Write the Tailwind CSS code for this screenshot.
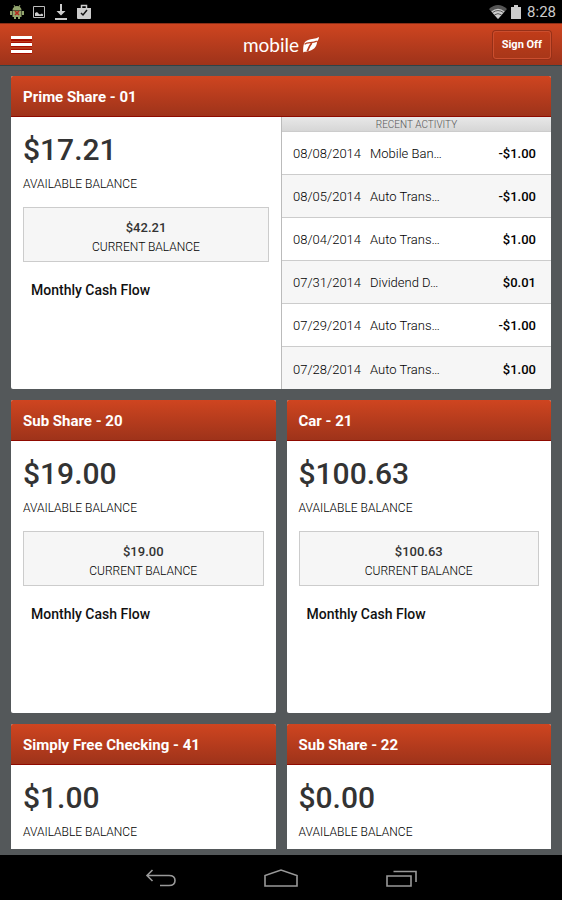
<!DOCTYPE html>
<html lang="en">
<head>
<meta charset="utf-8">
<meta name="viewport" content="width=device-width, initial-scale=1">
<title>Mobile Banking - Accounts</title>
<script src="https://cdn.jsdelivr.net/npm/@tailwindcss/browser@4"></script>
</head>
<body class="flex h-screen flex-col overflow-hidden bg-black font-[Roboto,sans-serif] text-[#333]">

<!-- Device status bar -->
<div class="flex h-[23px] shrink-0 items-center justify-between bg-black pr-1.5 pl-2.5">
  <div class="flex items-center gap-2">
    <svg class="h-4 w-[14px]" viewBox="0 0 14 16" fill="none"><path d="M4 1l1 2M10 1L9 3" stroke="#8fa06c"/><path d="M2.500 6a4.500 4 0 0 1 9 0zM2.500 6.500h9V13h-9z" fill="#93a56e"/><path d="M1 7v4M13 7v4M5 13v2M9 13v2" stroke="#93a56e" stroke-width="2"/><path d="M5 7l4 4M9 7l-4 4" stroke="#b3291f" stroke-width="1.600"/></svg>
    <svg class="h-4 w-[14px]" viewBox="0 0 14 16" fill="none"><path d="M1.500 2.500h11v11h-11z" stroke="#bbb"/><path d="M3 12V9l2-1 2 2 1 .5 2-1 1 1V12z" fill="#ccc"/></svg>
    <svg class="h-4 w-[14px]" viewBox="0 0 14 16"><path d="M6 0h2v7h3.500L7 11.500 2.500 7H6zM1 14h12v2H1z" fill="#ccc"/></svg>
    <svg class="h-4 w-4" viewBox="0 0 16 16" fill="none"><path d="M1 4h14v10q0 1-1 1H2q-1 0-1-1z" fill="#ccc"/><path d="M5.500 4V1.500h5V4" stroke="#ccc" stroke-width="1.500"/><path d="M5 9l2 2 4-5" stroke="#111" stroke-width="1.500"/></svg>
  </div>
  <div class="flex items-center gap-1">
    <svg class="h-[14px] w-[18px]" viewBox="0 0 18 14"><path d="M0 4Q9-4 18 4L9 14z" fill="#555"/><path d="M2.300 6.500Q9 1 15.700 6.500L9 14z" fill="#ccc"/><path d="M3.500 7.600Q9 3.500 14.500 7.600M5.500 9.800Q9 7.500 12.500 9.800" fill="none" stroke="#333" stroke-width=".8"/></svg>
    <svg class="h-[14px] w-[10px]" viewBox="0 0 10 14"><path d="M0 2h3V0h4v2h3v12H0z" fill="#ccc"/></svg>
    <span class="pl-0.5 text-[15px] leading-4 text-[#ccc]">8:28</span>
  </div>
</div>

<!-- App header -->
<header class="grid h-[43px] shrink-0 grid-cols-[1fr_auto_1fr] items-center border-t border-b border-t-[#8b2f18] border-b-[#2f4347] bg-linear-to-b from-[#cf4520] to-[#9e331a] px-[11px]">
  <button type="button" aria-label="Menu" class="h-[18px] w-[21px]">
    <svg class="h-[18px] w-[21px]" viewBox="0 0 21 18"><path d="M0 0h21v5H0zM0 6h21v5H0zM0 13h21v5H0z" fill="#a80f00"/><path d="M0 0h21v3H0zM0 7h21v3H0zM0 14h21v3H0z" fill="#fff"/></svg>
  </button>
  <div class="flex items-center gap-1 text-white">
    <span class="font-[Lato,sans-serif] text-[19px] leading-5">mobile</span>
    <svg class="h-4 w-4" viewBox="0 0 16 16" fill="none"><path d="M16 0C12.500 2 8.500 1.700 5 3 1 4.500 0 7.500.2 15.500 1.200 14.600 2.500 14.800 4 14.500 10.500 13.500 14 10 14 4.500 15.200 3.300 15.800 2 16 0z" fill="#fff"/><path d="M1.500 7.300C4.500 4.700 9 6.600 13.800 4.200" stroke="#b73d1d" stroke-width="1.300"/><path d="M8.700 6C7 8.200 5.500 11 4.300 14.200" stroke="#b73d1d" stroke-width="1.800"/></svg>
  </div>
  <button type="button" class="h-7 justify-self-end rounded-[3px] border border-[#cb4e2e] bg-linear-to-b from-[#c03c19] to-[#a83719] px-2 pt-0.5 text-[11px] font-bold text-white shadow-[0_0_0_1px_#963018]">Sign Off</button>
</header>

<!-- Accounts -->
<main class="flex min-h-0 flex-1 flex-col bg-[#54585a] px-[11px] pt-2.5 pb-1.5">
  <div class="grid min-h-0 flex-1 auto-rows-[313px] grid-cols-2 gap-[11px] overflow-hidden">

    <section class="col-span-2 flex flex-col overflow-hidden rounded-[2px] bg-white">
      <h2 class="h-[41px] shrink-0 border-b border-[#8f0a00] bg-linear-to-b from-[#cf4520] to-[#9e331a] px-3 text-[15px] leading-[43px] font-bold text-white">Prime Share - 01</h2>
      <div class="grid min-h-0 flex-1 grid-cols-2">
        <div class="px-3 pt-[15px]">
          <p class="text-[30px] leading-9 font-medium">$17.21</p>
          <p class="mt-2 text-xs leading-4 font-light text-black">AVAILABLE BALANCE</p>
          <div class="mt-[15px] h-[55px] border border-[#ccc] bg-[#f6f6f6] pt-2.5 text-center">
            <p class="text-[13px] leading-5 font-medium">$42.21</p>
            <p class="text-xs leading-[18px] font-light text-black">CURRENT BALANCE</p>
          </div>
          <h3 class="mt-[18px] px-2 text-sm leading-5 font-medium text-[#111]">Monthly Cash Flow</h3>
        </div>
        <div class="overflow-hidden border-l border-[#bbb]">
          <h3 class="h-[14px] bg-linear-to-b from-[#e8e8e8] to-[#d6d6d6] text-center text-[10px] leading-4 font-light text-[#555]">RECENT ACTIVITY</h3>
          <table class="w-full table-fixed border-collapse text-[13px]">
            <colgroup><col class="w-[88px]"><col><col class="w-[70px]"></colgroup>
            <tbody>
              <tr class="h-[43px] border-t border-[#ccc]"><td class="pt-0.5 pl-[11px] font-light text-black">08/08/2014</td><td class="pt-0.5 font-light text-black">Mobile Ban…</td><td class="pt-0.5 pr-[15px] text-right font-medium text-black">-$1.00</td></tr>
              <tr class="h-[43px] border-t border-[#ccc] bg-[#f6f6f6]"><td class="pt-0.5 pl-[11px] font-light text-black">08/05/2014</td><td class="pt-0.5 font-light text-black">Auto Trans…</td><td class="pt-0.5 pr-[15px] text-right font-medium text-black">-$1.00</td></tr>
              <tr class="h-[43px] border-t border-[#ccc]"><td class="pt-0.5 pl-[11px] font-light text-black">08/04/2014</td><td class="pt-0.5 font-light text-black">Auto Trans…</td><td class="pt-0.5 pr-[15px] text-right font-medium text-black">$1.00</td></tr>
              <tr class="h-[43px] border-t border-[#ccc] bg-[#f6f6f6]"><td class="pt-0.5 pl-[11px] font-light text-black">07/31/2014</td><td class="pt-0.5 font-light text-black">Dividend D…</td><td class="pt-0.5 pr-[15px] text-right font-medium text-black">$0.01</td></tr>
              <tr class="h-[43px] border-t border-[#ccc]"><td class="pt-0.5 pl-[11px] font-light text-black">07/29/2014</td><td class="pt-0.5 font-light text-black">Auto Trans…</td><td class="pt-0.5 pr-[15px] text-right font-medium text-black">-$1.00</td></tr>
              <tr class="h-[43px] border-t border-[#ccc] bg-[#f6f6f6]"><td class="pt-0.5 pl-[11px] font-light text-black">07/28/2014</td><td class="pt-0.5 font-light text-black">Auto Trans…</td><td class="pt-0.5 pr-[15px] text-right font-medium text-black">$1.00</td></tr>
            </tbody>
          </table>
        </div>
      </div>
    </section>

    <section class="overflow-hidden rounded-[2px] bg-white">
      <h2 class="h-[41px] border-b border-[#8f0a00] bg-linear-to-b from-[#cf4520] to-[#9e331a] px-3 text-[15px] leading-[43px] font-bold text-white">Sub Share - 20</h2>
      <div class="px-3 pt-[15px]">
        <p class="text-[30px] leading-9 font-medium">$19.00</p>
        <p class="mt-2 text-xs leading-4 font-light text-black">AVAILABLE BALANCE</p>
        <div class="mt-[15px] h-[55px] border border-[#ccc] bg-[#f6f6f6] pt-2.5 text-center">
          <p class="text-[13px] leading-5 font-medium">$19.00</p>
          <p class="text-xs leading-[18px] font-light text-black">CURRENT BALANCE</p>
        </div>
        <h3 class="mt-[18px] px-2 text-sm leading-5 font-medium text-[#111]">Monthly Cash Flow</h3>
      </div>
    </section>

    <section class="overflow-hidden rounded-[2px] bg-white">
      <h2 class="h-[41px] border-b border-[#8f0a00] bg-linear-to-b from-[#cf4520] to-[#9e331a] px-3 text-[15px] leading-[43px] font-bold text-white">Car - 21</h2>
      <div class="px-3 pt-[15px]">
        <p class="text-[30px] leading-9 font-medium">$100.63</p>
        <p class="mt-2 text-xs leading-4 font-light text-black">AVAILABLE BALANCE</p>
        <div class="mt-[15px] h-[55px] border border-[#ccc] bg-[#f6f6f6] pt-2.5 text-center">
          <p class="text-[13px] leading-5 font-medium">$100.63</p>
          <p class="text-xs leading-[18px] font-light text-black">CURRENT BALANCE</p>
        </div>
        <h3 class="mt-[18px] px-2 text-sm leading-5 font-medium text-[#111]">Monthly Cash Flow</h3>
      </div>
    </section>

    <section class="overflow-hidden rounded-[2px] bg-white">
      <h2 class="h-[41px] border-b border-[#8f0a00] bg-linear-to-b from-[#cf4520] to-[#9e331a] px-3 text-[15px] leading-[43px] font-bold text-white">Simply Free Checking - 41</h2>
      <div class="px-3 pt-[15px]">
        <p class="text-[30px] leading-9 font-medium">$1.00</p>
        <p class="mt-2 text-xs leading-4 font-light text-black">AVAILABLE BALANCE</p>
      </div>
    </section>

    <section class="overflow-hidden rounded-[2px] bg-white">
      <h2 class="h-[41px] border-b border-[#8f0a00] bg-linear-to-b from-[#cf4520] to-[#9e331a] px-3 text-[15px] leading-[43px] font-bold text-white">Sub Share - 22</h2>
      <div class="px-3 pt-[15px]">
        <p class="text-[30px] leading-9 font-medium">$0.00</p>
        <p class="mt-2 text-xs leading-4 font-light text-black">AVAILABLE BALANCE</p>
      </div>
    </section>
  </div>
</main>

<!-- Device navigation bar -->
<nav aria-label="System" class="flex h-[45px] shrink-0 items-center justify-center gap-[85px] bg-black text-[#999]">
  <button type="button" aria-label="Back"><svg class="h-5 w-9" viewBox="0 0 36 20" fill="none" stroke="currentColor" stroke-width="1.600"><path d="M10.500 2L5 7.500l5.500 5.500M5 7.500h22q6 0 6 5T27 17.500h-9"/></svg></button>
  <button type="button" aria-label="Home"><svg class="h-5 w-9" viewBox="0 0 36 20" fill="none" stroke="currentColor" stroke-width="1.600"><path d="M2 18V7.500L18 2l16 5.500V18z"/></svg></button>
  <button type="button" aria-label="Recent apps"><svg class="h-5 w-9" viewBox="0 0 36 20" fill="none" stroke="currentColor" stroke-width="1.600"><path d="M3 8h24v10H3zM9.500 3.500H32V14"/></svg></button>
</nav>
</body>
</html>
